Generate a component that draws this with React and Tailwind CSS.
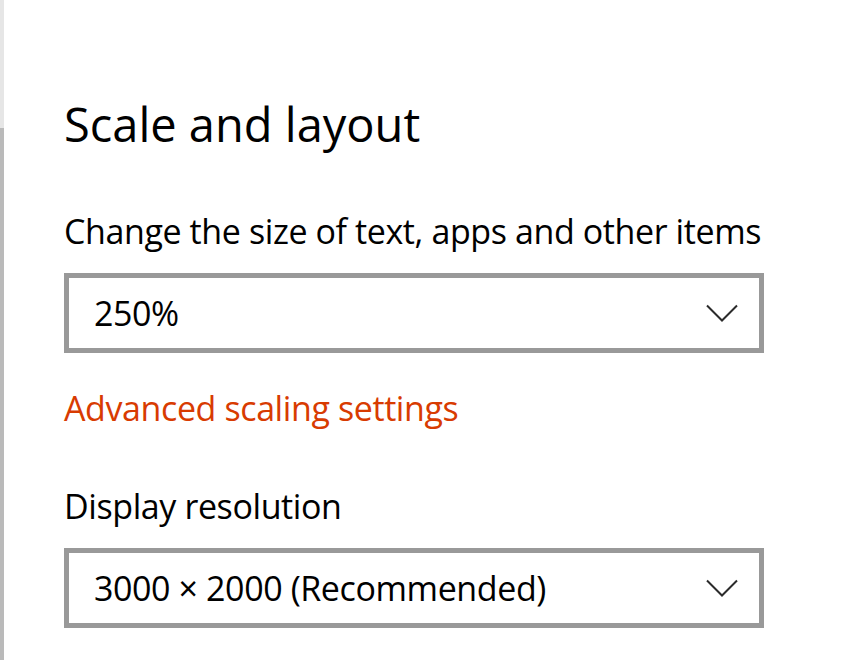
import React from "react";

function Chevron() {
  return (
    <svg width="32" height="19" viewBox="0 0 32 19" className="block shrink-0">
      <polyline points="1,1.5 16,16.5 31,1.5" fill="none" stroke="#2b2b2b" strokeWidth="2" />
    </svg>
  );
}

function Combo({ value }) {
  return (
    <div className="w-[700px] h-[80px] border-[5px] border-[#999999] bg-white flex items-center justify-between pl-[25px] pr-[21px]">
      <span className="text-[34px] leading-[40px] tracking-[-0.4px] text-black whitespace-nowrap">{value}</span>
      <Chevron />
    </div>
  );
}

export default function App() {
  return (
    <div
      className="w-[857px] h-[660px] overflow-hidden bg-white flex"
      style={{ fontFamily: '"Open Sans", "Noto Sans", sans-serif' }}
    >
      <div className="w-[4px] h-full flex flex-col shrink-0">
        <div className="h-[128px] bg-[#e6e6e6]" />
        <div className="flex-1 bg-[#bababa]" />
      </div>
      <div className="pl-[60px] flex flex-col">
        <h1 className="mt-[99px] text-[47px] leading-[50px] text-black font-normal whitespace-nowrap">
          Scale and layout
        </h1>
        <div className="mt-[62px] text-[34px] leading-[40px] tracking-[-0.4px] text-black whitespace-nowrap">
          Change the size of text, apps and other items
        </div>
        <div className="mt-[22px]">
          <Combo value="250%" />
        </div>
        <div className="mt-[35px] text-[34px] leading-[40px] tracking-[-0.4px] text-[#d83b01] whitespace-nowrap">
          Advanced scaling settings
        </div>
        <div className="mt-[58px] text-[34px] leading-[40px] tracking-[-0.4px] text-black whitespace-nowrap">
          Display resolution
        </div>
        <div className="mt-[22px]">
          <Combo value="3000 × 2000 (Recommended)" />
        </div>
      </div>
    </div>
  );
}
